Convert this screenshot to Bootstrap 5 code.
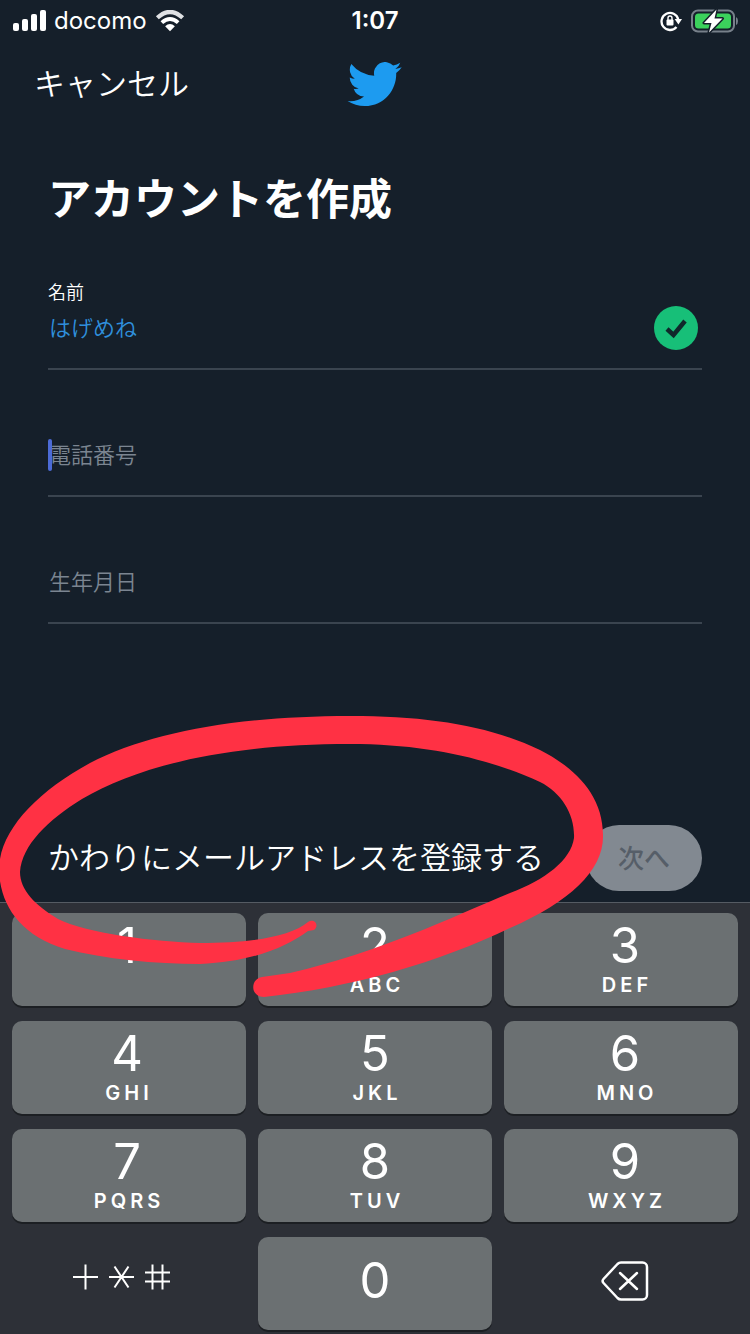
<!DOCTYPE html>
<html lang="ja">
<head>
<meta charset="utf-8">
<meta name="viewport" content="width=device-width, initial-scale=1">
<title>アカウントを作成</title>
<link href="https://cdn.jsdelivr.net/npm/bootstrap@5.3.0/dist/css/bootstrap.min.css" rel="stylesheet">
<style>
  body { background: #151f2a; color: #fff; font-family: Inter, "Noto Sans CJK JP", sans-serif; }
  svg { display: block; }
  .status-bar { height: 42px; padding: 0 12px; font-size: 24px; line-height: 42px; }
  .status-bar > * { flex: 1 1 0; }
  .nav-row { height: 84px; padding: 0 34px; }
  .nav-row > * { flex: 1 1 0; }
  .jp-text { font-size: 31px; line-height: 40px; font-weight: 350; color: #fff; }
  main { padding: 0 48px; }
  .page-title { font-size: 43px; line-height: 60px; font-weight: 700; margin: 43px 0 53px; }
  .field { padding-bottom: 24px; border-bottom: 2px solid #3a444f; margin-bottom: 69px; }
  .field label { font-size: 18px; line-height: 22px; font-weight: 350; margin-bottom: 8px; }
  .field input { height: 32px; padding: 0 1px; font-size: 22px; line-height: 32px; font-weight: 350; color: #2f8fdc; border: 0; border-radius: 0; background: transparent; box-shadow: none; }
  .field input:focus { background: transparent; color: #2f8fdc; box-shadow: none; }
  .field input::placeholder { color: #7b8591; opacity: 1; }
  .valid-mark { margin: -6px 4px -6px 0; }
  .text-caret { width: 4px; border-radius: 2px; background: #4c6bd6; }
  .action-row { padding: 12px 48px 11px; }
  .next-btn { width: 116px; height: 66px; font-size: 26px; font-weight: 500; padding: 0; }
  .next-btn:disabled { background: #828991; color: #565e68; border: 0; opacity: 1; }
  .keypad { background: #2d3037; border-top: 1px solid #555b63; padding: 10px 12px 4px; display: grid; grid-template-columns: repeat(3, 1fr); gap: 15px 12px; }
  .pad-key { display: flex; flex-direction: column; align-items: center; height: 93px; border: 0; border-radius: 10px; background: #6b7072; color: #fff; box-shadow: 0 2px 0 #1c1f23; padding: 6px 0 0; font-size: 49px; line-height: 54px; }
  .pad-key small { font-size: 20px; line-height: 24px; font-weight: 600; letter-spacing: 4px; padding-left: 4px; }
  .pad-key:nth-child(3n) { padding-left: 8px; }
  .pad-key:nth-child(3n+1) { padding-right: 4px; }
  .pad-key.plain { background: transparent; box-shadow: none; }
  .pad-key.solo { justify-content: center; padding-top: 0; padding-bottom: 6px; }
  .pad-key.symbols { padding-bottom: 14px; }
  .marker { top: -113px; left: 0; width: 100%; height: 310px; pointer-events: none; z-index: 5; }
</style>
</head>
<body>
<div class="d-flex flex-column min-vh-100 overflow-hidden">
  <div class="status-bar d-flex align-items-center">
    <div class="d-flex align-items-center">
      <svg width="34" height="22" viewBox="0 0 34 22" fill="#fff" aria-hidden="true"><rect x="1" y="13" width="6" height="8" rx="2"/><rect x="10" y="9" width="6" height="12" rx="2"/><rect x="19" y="4" width="6" height="17" rx="2"/><rect x="28" y="0" width="6" height="21" rx="2"/></svg>
      <span class="ms-2">docomo</span>
      <svg class="ms-2" width="30" height="23" viewBox="0 0 32 24" aria-hidden="true"><path d="M2.500 8Q16-4.400 29.500 8" fill="none" stroke="#dfe1e4" stroke-width="4.500"/><path d="M7.300 13.200Q16 5.500 24.700 13.200" fill="none" stroke="#fff" stroke-width="4.200"/><path d="M10.800 17Q16 12.500 21.200 17L16 22.500Z" fill="#fff"/></svg>
    </div>
    <div class="text-center fw-semibold">1:07</div>
    <div class="d-flex align-items-center justify-content-end">
      <svg width="22" height="22" viewBox="0 0 22 22" aria-hidden="true"><path d="M16.500 17A8.500 8.500 0 1 1 18.300 9.500" fill="none" stroke="#fff" stroke-width="2.300"/><path d="M14.600 9h7.400l-3.600 5.500z" fill="#fff"/><rect x="6.500" y="9.500" width="7" height="6" rx="1" fill="#fff"/><path d="M8 10V8a2 2 0 0 1 4 0v2" fill="none" stroke="#fff" stroke-width="1.400"/></svg>
      <svg class="ms-2" width="48" height="24" viewBox="0 0 48 24" aria-hidden="true"><rect x="2" y="1.500" width="42" height="21" rx="6" fill="none" stroke="#77808a" stroke-width="2"/><rect x="5" y="4.500" width="36" height="15" rx="3.500" fill="#3bd15c"/><path d="M46 8q2 1 2 4t-2 4z" fill="#77808a"/><path d="M26.500 0.500L14 14h7.500L19 23.500 32.500 9.500h-8z" fill="#fff" stroke="#151f2a" stroke-width="3" stroke-linejoin="round" paint-order="stroke"/></svg>
    </div>
  </div>

  <header class="nav-row d-flex align-items-center">
    <div><a href="#" class="jp-text text-decoration-none">キャンセル</a></div>
    <svg width="54" height="44" viewBox="0 2 16 13" fill="#1d9bf0" role="img" aria-label="Twitter"><path d="M5.026 15c6.038 0 9.341-5.003 9.341-9.334 0-.14 0-.282-.006-.422A6.685 6.685 0 0 0 16 3.542a6.658 6.658 0 0 1-1.889.518 3.301 3.301 0 0 0 1.447-1.817 6.533 6.533 0 0 1-2.087.793A3.286 3.286 0 0 0 7.875 6.030a9.325 9.325 0 0 1-6.767-3.429 3.289 3.289 0 0 0 1.018 4.382A3.323 3.323 0 0 1 .64 6.575v.045a3.288 3.288 0 0 0 2.632 3.218 3.203 3.203 0 0 1-.865.115 3.230 3.230 0 0 1-.614-.057 3.283 3.283 0 0 0 3.067 2.277A6.588 6.588 0 0 1 .78 13.580a6.320 6.320 0 0 1-.78-.045A9.344 9.344 0 0 0 5.026 15z"/></svg>
    <div></div>
  </header>

  <main class="flex-grow-1">
    <h1 class="page-title">アカウントを作成</h1>
    <form>
      <div class="field">
        <label class="d-block" for="name">名前</label>
        <div class="d-flex align-items-center">
          <input class="form-control" type="text" id="name" value="はげめね">
          <svg class="valid-mark flex-shrink-0" width="44" height="44" viewBox="0 0 44 44" aria-hidden="true"><circle cx="22" cy="22" r="22" fill="#17bf78"/><path d="M13 23l6.500 6L31 15" fill="none" stroke="#10282b" stroke-width="4.500"/></svg>
        </div>
      </div>
      <div class="field">
        <div class="position-relative">
          <input class="form-control" type="tel" id="phone" placeholder="電話番号" aria-label="電話番号">
          <span class="text-caret position-absolute top-0 start-0 h-100"></span>
        </div>
      </div>
      <div class="field mb-0">
        <input class="form-control" type="text" id="birthday" placeholder="生年月日" aria-label="生年月日">
      </div>
    </form>
  </main>

  <div class="position-relative">
    <div class="action-row d-flex align-items-center justify-content-between">
      <a href="#" class="jp-text text-decoration-none text-nowrap">かわりにメールアドレスを登録する</a>
      <button type="button" class="btn rounded-pill next-btn" disabled>次へ</button>
    </div>
    <div class="keypad">
      <button type="button" class="pad-key">1</button>
      <button type="button" class="pad-key">2<small>ABC</small></button>
      <button type="button" class="pad-key">3<small>DEF</small></button>
      <button type="button" class="pad-key">4<small>GHI</small></button>
      <button type="button" class="pad-key">5<small>JKL</small></button>
      <button type="button" class="pad-key">6<small>MNO</small></button>
      <button type="button" class="pad-key">7<small>PQRS</small></button>
      <button type="button" class="pad-key">8<small>TUV</small></button>
      <button type="button" class="pad-key">9<small>WXYZ</small></button>
      <button type="button" class="pad-key plain solo symbols" aria-label="記号">
        <svg width="110" height="28" viewBox="0 0 110 28" fill="none" stroke="#fff" stroke-width="2"><path d="M1 14h25M13.500 1.500v25M37 14h25M42.500 3.500l14 21M56.500 3.500l-14 21M73 9.500h25M73 18.500h25M80.500 1.500v25M90.500 1.500v25"/></svg>
      </button>
      <button type="button" class="pad-key solo">0</button>
      <button type="button" class="pad-key plain solo" aria-label="削除">
        <svg width="48" height="40" viewBox="0 0 48 40" fill="none" stroke="#fff" stroke-width="2.500" stroke-linecap="round" stroke-linejoin="round"><path d="M20 1.500h21.500a4.500 4.500 0 0 1 4.500 4.500v28a4.500 4.500 0 0 1-4.500 4.500H20q-2 0-3.500-1.500L2.500 22q-1.800-2 0-4L16.500 3Q18 1.500 20 1.500z"/><path d="M19 12l17 16M36 12L19 28"/></svg>
      </button>
    </div>
    <svg class="marker position-absolute" viewBox="0 700 750 310" preserveAspectRatio="none" fill="#ff3144" aria-hidden="true"><path d="M308 922C290 937 250 943 200 943C155 942 85 933 58 919C35 905 20 890 20 872C22 845 48 820 82 799C135 768 220 744 350 744C430 744 492 760 540 782C562 793 575 815 574 838C571 860 545 880 510 893C450 918 380 952 290 973L262 977C250 979 250 997 264 997C350 988 440 962 510 928C570 902 604 870 603 835C603 795 575 768 540 750C490 726 430 716 350 716C240 716 150 732 90 763C35 793-1 832-1 870C0 905 20 935 65 949C105 959 155 964 200 964C250 962 285 948 308 931L314 930C320 925 314 918 308 922Z"/></svg>
  </div>
</div>
<script src="https://cdn.jsdelivr.net/npm/bootstrap@5.3.0/dist/js/bootstrap.bundle.min.js"></script>
</body>
</html>
